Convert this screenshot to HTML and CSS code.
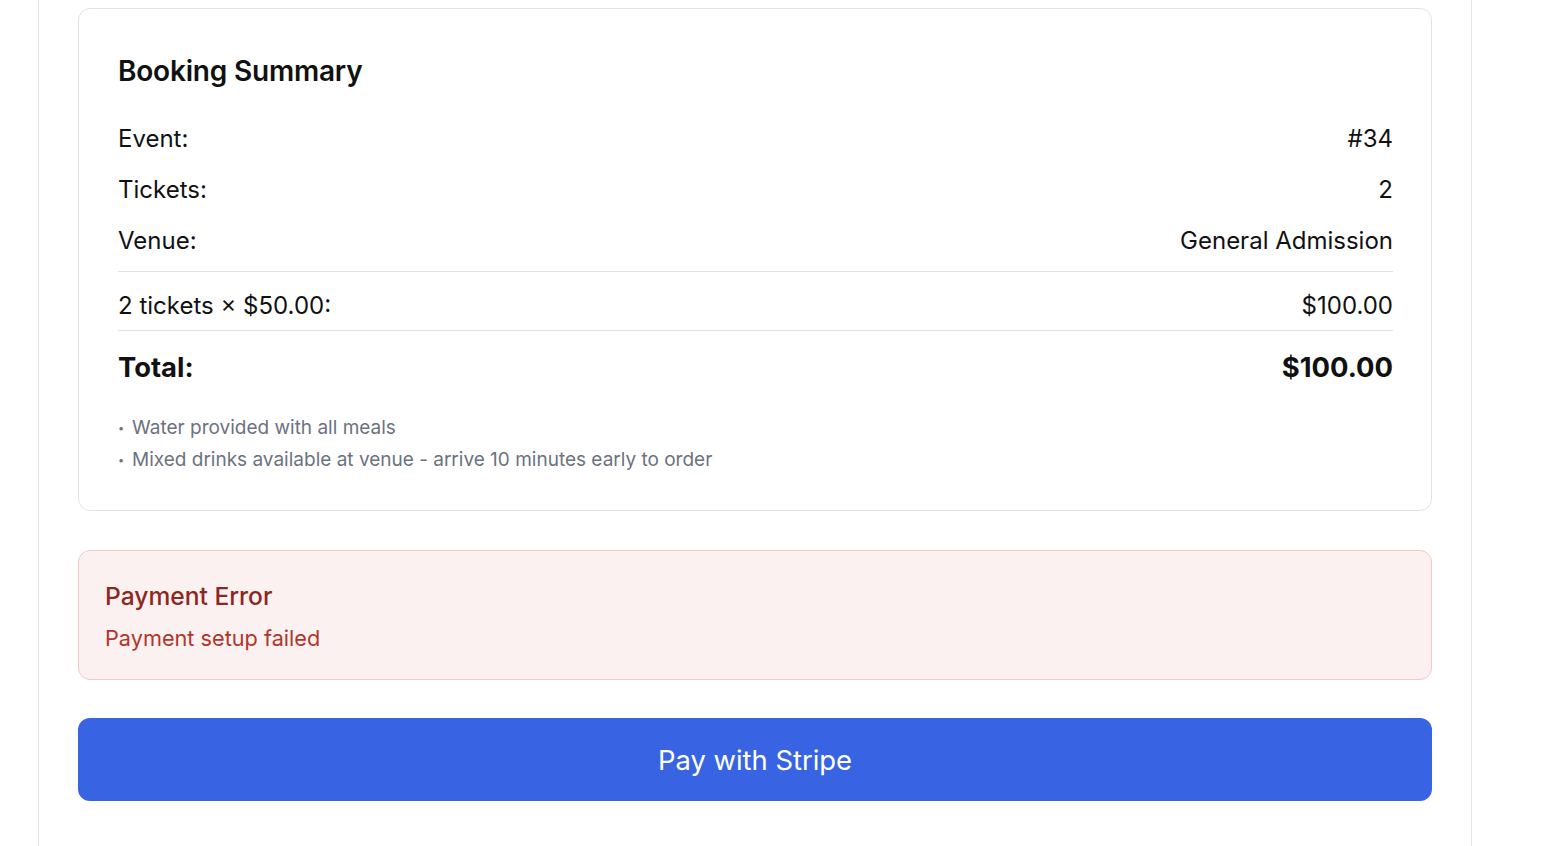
FILE: index.html
```html
<!DOCTYPE html>
<html lang="en">
<head>
<meta charset="utf-8">
<title>Booking Summary</title>
<link rel="stylesheet" href="styles.css">
</head>
<body>
<div class="page">
  <div class="container">
    <section class="card">
      <h2 class="card-title">Booking Summary</h2>
      <div class="details">
        <div class="row"><span>Event:</span><span>#34</span></div>
        <div class="row"><span>Tickets:</span><span>2</span></div>
        <div class="row"><span>Venue:</span><span>General Admission</span></div>
      </div>
      <div class="row subtotal"><span>2 tickets × $50.00:</span><span>$100.00</span></div>
      <div class="row total"><span>Total:</span><span>$100.00</span></div>
      <ul class="notes">
        <li><span class="bullet">•</span>Water provided with all meals</li>
        <li><span class="bullet">•</span>Mixed drinks available at venue - arrive 10 minutes early to order</li>
      </ul>
    </section>

    <div class="error">
      <h3 class="error-title">Payment Error</h3>
      <p class="error-text">Payment setup failed</p>
    </div>

    <button class="pay-btn" type="button">Pay with Stripe</button>
  </div>
</div>
</body>
</html>
```

FILE: styles.css
```css
* { box-sizing: border-box; }

html, body {
  margin: 0;
  padding: 0;
  background: #ffffff;
  font-family: Inter, "Noto Sans", "Liberation Sans", sans-serif;
  color: #111111;
}

.page {
  padding-left: 38px;
  width: 1472px;
}

.container {
  border-left: 1px solid #e5e5e5;
  border-right: 1px solid #e5e5e5;
  padding: 8px 39px 45px;
  min-height: 846px;
  display: flex;
  flex-direction: column;
}

.card {
  border: 1px solid #e3e3e3;
  border-radius: 12px;
  padding: 40px 38px 34px 39px;
  background: #fff;
}

.card-title {
  margin: 0;
  font-size: 28px;
  line-height: 44px;
  font-weight: 600;
  color: #111;
  letter-spacing: -0.2px;
}

.details {
  margin-top: 28px;
  padding-bottom: 12px;
  border-bottom: 1px solid #e2e2e2;
  display: flex;
  flex-direction: column;
  gap: 15px;
}

.row {
  display: flex;
  justify-content: space-between;
  font-size: 24px;
  line-height: 36px;
  color: #111;
}

.subtotal {
  padding: 16px 0 6px;
  border-bottom: 1px solid #e2e2e2;
}

.total {
  padding-top: 16px;
  font-size: 27.4px;
  line-height: 40px;
  font-weight: 700;
}

.notes {
  list-style: none;
  margin: 25px 0 0;
  padding: 0;
  font-size: 19px;
  line-height: 31px;
  color: #6b7280;
}

.bullet {
  display: inline-block;
  width: 14px;
  font-size: 11px;
  vertical-align: 2px;
}

.error {
  margin-top: 39px;
  background: #fcf1f1;
  border: 1px solid #f4c8c8;
  border-radius: 12px;
  padding: 29px 26px 25px;
}

.error-title {
  margin: 0;
  font-size: 24.6px;
  line-height: 32px;
  font-weight: 500;
  color: #8c2720;
}

.error-text {
  margin: 10px 0 0;
  font-size: 21.7px;
  line-height: 32px;
  color: #b2352c;
}

.pay-btn {
  margin-top: 38px;
  height: 83px;
  width: 100%;
  border: none;
  border-radius: 12px;
  background: #3864e3;
  color: #ffffff;
  font-family: inherit;
  font-size: 27.4px;
  font-weight: 400;
  cursor: pointer;
}
```
